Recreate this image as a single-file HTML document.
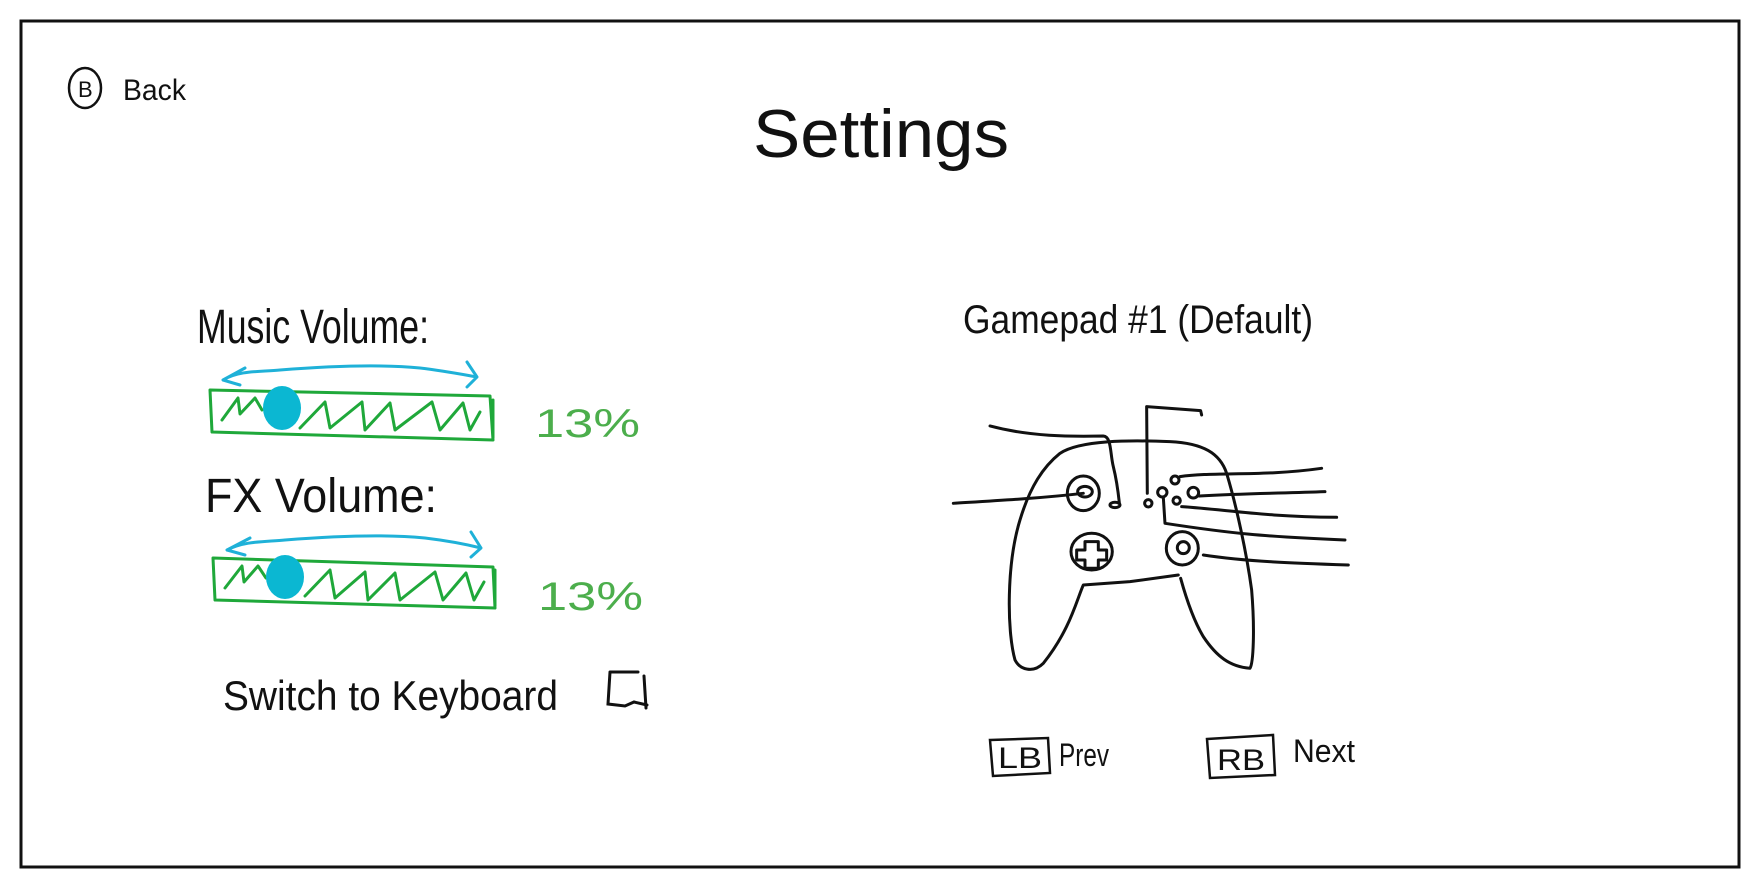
<!DOCTYPE html>
<html><head><meta charset="utf-8"><style>
html,body{margin:0;padding:0;background:#fff;}
svg{display:block;}
.h{font-family:"Liberation Sans Narrow","Liberation Sans",sans-serif;fill:#111;}
</style></head><body>
<svg width="1758" height="886" viewBox="0 0 1758 886" xmlns="http://www.w3.org/2000/svg">
<rect x="21" y="21" width="1718" height="846" fill="#fff" stroke="#111" stroke-width="3"/>

<!-- Back -->
<ellipse cx="85" cy="88" rx="16" ry="20" fill="none" stroke="#111" stroke-width="2.5"/>
<text x="78" y="97" class="h" font-size="22">B</text>
<text x="123" y="100" class="h" font-size="30" textLength="63" lengthAdjust="spacingAndGlyphs">Back</text>

<!-- Title -->
<text x="753" y="157" font-family="Liberation Sans, sans-serif" font-size="68" fill="#111" textLength="256" lengthAdjust="spacingAndGlyphs">Settings</text>

<!-- Music volume -->
<text x="197" y="343" class="h" font-size="48" textLength="232" lengthAdjust="spacingAndGlyphs">Music Volume:</text>
<g fill="none" stroke-linecap="round" stroke-linejoin="round">
<path d="M223,380 C240,370 260,372 280,370 C330,366 380,364 420,368 C445,371 460,374 477,377 M467,362 L477,377 L467,387 M223,380 L245,368 M223,380 L240,385" stroke="#1fb1d8" stroke-width="3"/>
<path d="M210,390 L490,396 L493,440 L212,432 Z M493,400 L493,438" stroke="#1fa83a" stroke-width="3"/>
<path d="M222,420 L238,398 L240,414 L255,398 L262,410 M300,428 L325,402 L330,428 L362,402 L365,430 L390,403 L395,430 L432,402 L440,430 L463,403 L470,430 L480,412" stroke="#1fa83a" stroke-width="3"/>
</g>
<ellipse cx="282" cy="408" rx="19" ry="22" fill="#0bb7d2"/>
<text x="535" y="437" font-family="Liberation Sans Narrow, Liberation Sans, sans-serif" font-size="40" fill="#4cae4c" textLength="105" lengthAdjust="spacingAndGlyphs">13%</text>

<!-- FX volume -->
<text x="205" y="512" class="h" font-size="48" textLength="232" lengthAdjust="spacingAndGlyphs">FX Volume:</text>
<g fill="none" stroke-linecap="round" stroke-linejoin="round">
<path d="M227,550 C245,541 262,542 285,540 C335,536 385,534 425,538 C450,541 465,544 481,548 M471,532 L481,548 L471,557 M227,550 L250,538 M227,550 L245,555" stroke="#1fb1d8" stroke-width="3"/>
<path d="M213,558 L493,567 L495,608 L215,600 Z M495,570 L495,606" stroke="#1fa83a" stroke-width="3"/>
<path d="M225,588 L242,566 L244,582 L258,566 L266,578 M305,596 L330,570 L335,598 L365,572 L368,600 L395,573 L400,600 L435,572 L443,600 L466,573 L474,600 L484,582" stroke="#1fa83a" stroke-width="3"/>
</g>
<ellipse cx="285" cy="577" rx="19" ry="22" fill="#0bb7d2"/>
<text x="538" y="610" font-family="Liberation Sans Narrow, Liberation Sans, sans-serif" font-size="40" fill="#4cae4c" textLength="105" lengthAdjust="spacingAndGlyphs">13%</text>

<!-- Switch -->
<text x="223" y="710" class="h" font-size="42" textLength="335" lengthAdjust="spacingAndGlyphs">Switch to Keyboard</text>
<path d="M610,672 L608,704 L625,706 L634,702 L647,705 M610,672 L638,672 M644,676 L646,708" fill="none" stroke="#111" stroke-width="3" stroke-linecap="round"/>

<!-- Gamepad -->
<text x="963" y="333" class="h" font-size="40" textLength="350" lengthAdjust="spacingAndGlyphs">Gamepad #1 (Default)</text>

<g transform="translate(930,280) scale(0.3333)" fill="none" stroke="#111" stroke-width="9" stroke-linecap="round" stroke-linejoin="round">
<path d="M745,885 L600,905 L460,915 C440,960 420,1050 340,1150 C310,1180 270,1170 255,1140 C230,1050 230,850 270,720 C300,620 340,560 390,520 C450,480 600,480 720,485 C820,490 870,520 890,580 C920,680 950,820 965,930 C975,1050 970,1150 960,1165 C900,1160 860,1130 820,1070 C790,1020 770,960 752,895"/>
<ellipse cx="460" cy="640" rx="48" ry="52"/>
<ellipse cx="465" cy="635" rx="22" ry="16"/>
<path d="M70,670 C200,662 330,655 460,640"/>
<ellipse cx="555" cy="675" rx="15" ry="8"/>
<path d="M180,438 C300,470 420,470 520,468 C545,470 540,520 550,560 C560,600 565,640 568,668"/>
<circle cx="655" cy="670" r="11"/>
<path d="M652,640 L650,380 L812,392 L815,405"/>
<circle cx="735" cy="600" r="12"/>
<circle cx="697" cy="637" r="14"/>
<circle cx="790" cy="638" r="16"/>
<circle cx="740" cy="662" r="11"/>
<path d="M750,590 C850,575 1000,590 1175,565"/>
<path d="M808,648 C950,640 1050,640 1185,635"/>
<path d="M755,680 C900,690 1000,710 1220,712"/>
<path d="M700,652 L705,730 C900,760 1000,770 1245,780"/>
<path d="M820,825 C950,845 1100,850 1255,855"/>
<ellipse cx="485" cy="815" rx="62" ry="55"/>
<path d="M465,785 h40 v25 h25 v30 h-25 v25 h-40 v-25 h-25 v-30 h25 z"/>
<ellipse cx="757" cy="805" rx="48" ry="50"/>
<circle cx="760" cy="803" r="18"/>
</g>

<!-- LB / RB -->
<path d="M990,740 L1048,738 L1050,773 L993,776 Z" fill="none" stroke="#111" stroke-width="2.5"/>
<text x="998" y="768" class="h" font-size="30" textLength="44" lengthAdjust="spacingAndGlyphs">LB</text>
<text x="1059" y="766" class="h" font-size="32" textLength="50" lengthAdjust="spacingAndGlyphs">Prev</text>
<path d="M1207,739 L1273,735 L1275,775 L1210,778 Z" fill="none" stroke="#111" stroke-width="2.5"/>
<text x="1217" y="770" class="h" font-size="30" textLength="48" lengthAdjust="spacingAndGlyphs">RB</text>
<text x="1293" y="762" class="h" font-size="32" textLength="62" lengthAdjust="spacingAndGlyphs">Next</text>
</svg>
</body></html>
